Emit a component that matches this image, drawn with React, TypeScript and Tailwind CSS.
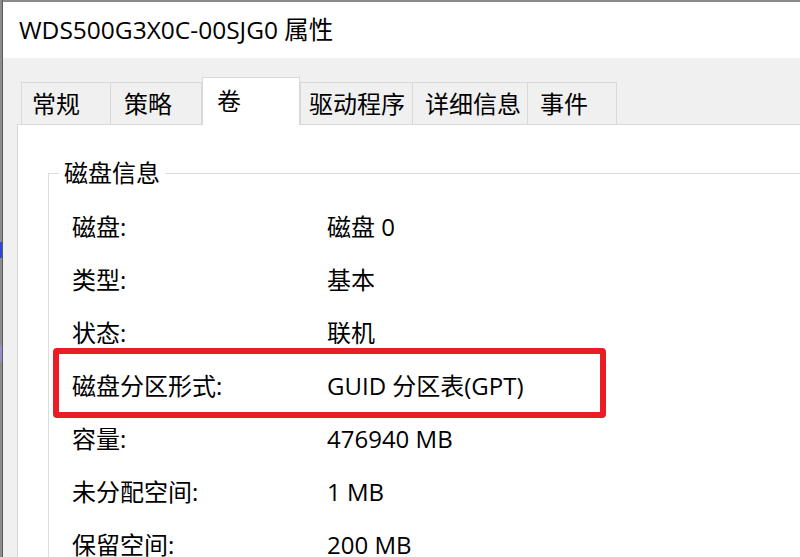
const font = { fontFamily: '"Open Sans", "Noto Sans CJK SC", sans-serif' };

type Tab = { label: string; w: string; pl: string; active?: boolean };

const tabs: Tab[] = [
  { label: "常规", w: "w-[90px]", pl: "pl-[10px]" },
  { label: "策略", w: "w-[92px]", pl: "pl-[13px]" },
  { label: "卷", w: "w-[98px]", pl: "pl-[14px]", active: true },
  { label: "驱动程序", w: "w-[113px]", pl: "pl-[8px]" },
  { label: "详细信息", w: "w-[116px]", pl: "pl-[12px]" },
  { label: "事件", w: "w-[90px]", pl: "pl-[12px]" },
];

const rows: [string, string][] = [
  ["磁盘:", "磁盘 0"],
  ["类型:", "基本"],
  ["状态:", "联机"],
  ["磁盘分区形式:", "GUID 分区表(GPT)"],
  ["容量:", "476940 MB"],
  ["未分配空间:", "1 MB"],
  ["保留空间:", "200 MB"],
];

export default function App() {
  return (
    <div
      className="relative w-[800px] h-[557px] overflow-hidden flex bg-white text-black"
      style={font}
    >
      {/* background window edge */}
      <div className="w-[3px] h-full flex flex-col bg-[#8c8c8c] border-r border-[#5a5a5a]">
        <div className="h-[242px]" />
        <div className="h-[16px] bg-[#2a4bd8]" />
        <div className="h-[87px]" />
        <div className="h-[16px] bg-[#9a8cc8]" />
      </div>

      <div className="flex-1 flex flex-col border-t-2 border-[#8a8a8a]">
        {/* title bar */}
        <div className="h-[56px] shrink-0 bg-white flex items-center pl-[16px] text-[24.5px] leading-none">
          WDS500G3X0C-00SJG0 属性
        </div>

        {/* dialog body */}
        <div className="flex-1 bg-[#f0f0f0] pl-[14px] pt-[19px] flex flex-col">
          {/* tab strip */}
          <div className="flex items-end h-[48px] pl-[4px] -mb-px relative z-10">
            {tabs.map((t, i) =>
              t.active ? (
                <div
                  key={t.label}
                  className={`${t.w} ${t.pl} h-[48px] bg-white border border-b-0 border-[#d9d9d9] pt-[8px] text-[24px] leading-[30px]`}
                >
                  {t.label}
                </div>
              ) : (
                <div
                  key={t.label}
                  className={`${t.w} ${t.pl} ${i === 0 || tabs[i - 1].active ? "" : "-ml-px"} h-[43px] bg-[#f0f0f0] border border-[#d9d9d9] flex items-center text-[24px] leading-none`}
                >
                  {t.label}
                </div>
              ),
            )}
          </div>

          {/* tab page */}
          <div className="flex-1 bg-white border-l border-t border-[#d9d9d9] pt-[32px] pl-[30px]">
            <fieldset className="border border-[#dcdcdc] border-r-0 border-b-0 pb-[40px]">
              <legend className="ml-[10px] px-[5px] text-[24px] leading-[32px]">
                磁盘信息
              </legend>
              <div className="pt-[11px] pl-[23px] flex flex-col">
                {rows.map(([k, v]) => (
                  <div key={k} className="h-[53px] flex items-center text-[24px] leading-none">
                    <div className="w-[255px]">{k}</div>
                    <div>{v}</div>
                  </div>
                ))}
              </div>
            </fieldset>
          </div>
        </div>
      </div>

      {/* red highlight around the partition style row */}
      <div className="absolute left-[53px] top-[348px] w-[553px] h-[70px] border-[6px] border-[#ec1c24] rounded-[4px]" />
    </div>
  );
}
